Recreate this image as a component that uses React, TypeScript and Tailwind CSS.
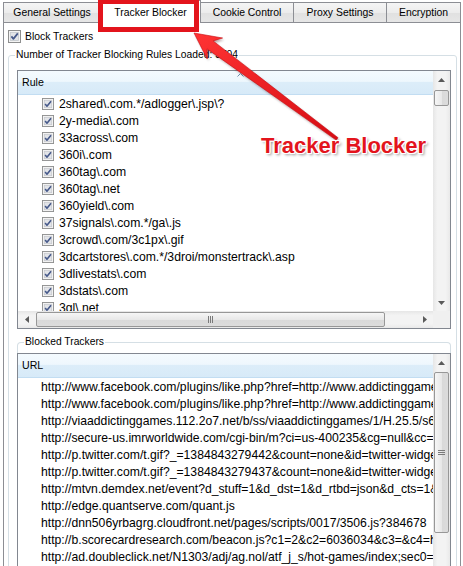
import React from "react";

const rules = [
  "2shared\\.com.*/adlogger\\.jsp\\?",
  "2y-media\\.com",
  "33across\\.com",
  "360i\\.com",
  "360tag\\.com",
  "360tag\\.net",
  "360yield\\.com",
  "37signals\\.com.*/ga\\.js",
  "3crowd\\.com/3c1px\\.gif",
  "3dcartstores\\.com.*/3droi/monstertrack\\.asp",
  "3dlivestats\\.com",
  "3dstats\\.com",
  "3gl\\.net",
];

const urls = [
  "http://www.facebook.com/plugins/like.php?href=http://www.addictinggames.com/",
  "http://www.facebook.com/plugins/like.php?href=http://www.addictinggames.com/",
  "http://viaaddictinggames.112.2o7.net/b/ss/viaaddictinggames/1/H.25.5/s64381",
  "http://secure-us.imrworldwide.com/cgi-bin/m?ci=us-400235&cg=null&cc=1",
  "http://p.twitter.com/t.gif?_=1384843279442&count=none&id=twitter-widget-0",
  "http://p.twitter.com/t.gif?_=1384843279437&count=none&id=twitter-widget-1",
  "http://mtvn.demdex.net/event?d_stuff=1&d_dst=1&d_rtbd=json&d_cts=1&d_cb=",
  "http://edge.quantserve.com/quant.js",
  "http://dnn506yrbagrg.cloudfront.net/pages/scripts/0017/3506.js?384678",
  "http://b.scorecardresearch.com/beacon.js?c1=2&c2=6036034&c3=&c4=http",
  "http://ad.doubleclick.net/N1303/adj/ag.nol/atf_j_s/hot-games/index;sec0=hot",
];

function Check({ size }: { size: number }) {
  return (
    <svg width={size} height={size} viewBox="0 0 13 13" className="shrink-0 block">
      <rect x="0.5" y="0.5" width="12" height="12" fill="#f4f4f4" stroke="#8e8f8f" />
      <rect x="2.5" y="2.5" width="8" height="8" fill="#e2e4e8" stroke="#c4c7cc" strokeWidth="0.8" />
      <path d="M3.4 6.4 L5.4 8.9 L9.8 3.4" stroke="#46598a" strokeWidth="1.7" fill="none" strokeLinejoin="round" />
    </svg>
  );
}

function Tri({ dir }: { dir: "up" | "down" | "left" | "right" }) {
  const d =
    dir === "up"
      ? "M0 4 L3.5 0 L7 4 Z"
      : dir === "down"
      ? "M0 0 L7 0 L3.5 4 Z"
      : dir === "left"
      ? "M4 0 L4 7 L0 3.5 Z"
      : "M0 0 L4 3.5 L0 7 Z";
  const w = dir === "up" || dir === "down" ? 7 : 4;
  const h = dir === "up" || dir === "down" ? 4 : 7;
  return (
    <svg width={w} height={h} viewBox={`0 0 ${w} ${h}`} className="block">
      <path d={d} fill="#5a5a5a" />
    </svg>
  );
}

function Tab({ w, children }: { w: string; children: React.ReactNode }) {
  return (
    <div
      className={`${w} h-[20px] border border-b-0 border-[#8c8e94] -mr-px bg-[linear-gradient(to_bottom,#f5f5f5,#ececec_50%,#e1e1e1_55%,#e6e6e6)] flex items-center justify-center text-[10.4px] leading-[12px] whitespace-nowrap pt-[1px]`}
    >
      {children}
    </div>
  );
}

function VScroll({ thumbTop, thumbH, grip }: { thumbTop: string; thumbH: string; grip?: boolean }) {
  return (
    <div className="w-[17px] shrink-0 flex flex-col bg-[linear-gradient(to_right,#e6e6e6,#f3f3f3_25%,#f3f3f3_75%,#e9e9e9)]">
      <div className="h-[17px] shrink-0 flex items-center justify-center">
        <Tri dir="up" />
      </div>
      <div className="flex-1 min-h-0 flex flex-col items-center">
        <div
          className={`${thumbTop} ${thumbH} w-[15px] rounded-[2px] border border-[#979797] bg-[linear-gradient(to_right,#f6f6f6,#e8e8e8_50%,#d9d9d9_51%,#dcdcdc)] flex items-center justify-center`}
        >
          {grip && (
            <div className="flex flex-col gap-[1px]">
              <div className="w-[7px] h-px bg-[#7a7a7a]" />
              <div className="w-[7px] h-px bg-[#7a7a7a]" />
              <div className="w-[7px] h-px bg-[#7a7a7a]" />
            </div>
          )}
        </div>
      </div>
      <div className="h-[17px] shrink-0 flex items-center justify-center">
        <Tri dir="down" />
      </div>
    </div>
  );
}

function HeaderCell({ label, sort }: { label: string; sort?: boolean }) {
  return (
    <div className="relative h-[24px] shrink-0 flex items-center pl-[4px] text-[10.6px] border-b border-[#c2ddf2] bg-[linear-gradient(to_bottom,#f4fafe,#eef7fd_45%,#dcedf9_50%,#d7eaf8)]">
      {label}
      {sort && (
        <svg width="7" height="4" viewBox="0 0 7 4" className="absolute left-[219px] top-[2px]">
          <path d="M0.5 3.5 L3.5 0.5 L6.5 3.5" stroke="#6d8fae" fill="none" />
        </svg>
      )}
    </div>
  );
}

const ARROW =
  "194,33 222.6,38 213.1,40.9 338,137.7 336.2,140.1 207.1,48.9 207.2,59";

export default function App() {
  return (
    <div className="relative w-[463px] h-[566px] overflow-hidden bg-white text-black font-['Liberation_Sans',Arial,sans-serif]">
      {/* Tabs */}
      <div className="relative z-10 flex items-end h-[22px] pl-[3px]">
        <Tab w="w-[98px]">General Settings</Tab>
        <div className="w-[101px] h-[23px] -mb-px -mr-px bg-white border border-b-0 border-[#8c8e94] flex items-center justify-center text-[10.4px] leading-[12px] whitespace-nowrap pt-[1px]">
          Tracker Blocker
        </div>
        <Tab w="w-[94px]">Cookie Control</Tab>
        <Tab w="w-[94px]">Proxy Settings</Tab>
        <Tab w="w-[75px]">Encryption</Tab>
      </div>

      {/* Panel */}
      <div className="ml-[3px] w-[458px] h-[560px] border border-[#8c8e94] bg-white overflow-hidden">
        <div className="flex items-center h-[13px] mt-[7px] ml-[4px]">
          <Check size={13} />
          <span className="ml-[4px] text-[10.4px] leading-[12px]">Block Trackers</span>
        </div>

        <fieldset className="min-w-0 mt-[6px] ml-[4px] mr-[3px] h-[560px] border border-[#d5dfe5] rounded-[3px] pl-[8px] pr-[5px]">
          <legend className="ml-[-2px] px-[1px] text-[10.3px] leading-[12px]">
            Number of Tracker Blocking Rules Loaded: 3704
          </legend>

          {/* Rule list */}
          <div className="mt-[9px] h-[259px] border border-[#828790] flex flex-col bg-white overflow-hidden">
            <div className="flex flex-1 min-h-0">
              <div className="flex-1 min-w-0 flex flex-col overflow-hidden">
                <HeaderCell label="Rule" sort />
                <div className="flex-1 min-h-0 overflow-hidden">
                  {rules.map((r, i) => (
                    <div key={i} className="h-[17px] flex items-center pl-[24px] gap-[5px] text-[12.2px] leading-[14px] whitespace-nowrap">
                      <Check size={12} />
                      <span>{r}</span>
                    </div>
                  ))}
                </div>
              </div>
              <VScroll thumbTop="mt-[2px]" thumbH="h-[16px]" />
            </div>
            <div className="h-[17px] shrink-0 flex bg-[linear-gradient(to_bottom,#e6e6e6,#f3f3f3_25%,#f3f3f3_75%,#e9e9e9)]">
              <div className="w-[17px] shrink-0 flex items-center justify-center">
                <Tri dir="left" />
              </div>
              <div className="flex-1 min-w-0 flex items-center">
                <div className="ml-[1px] w-[349px] h-[15px] rounded-[2px] border border-[#979797] bg-[linear-gradient(to_bottom,#f6f6f6,#e8e8e8_50%,#d9d9d9_51%,#dcdcdc)] flex items-center justify-center">
                  <div className="flex gap-[1px]">
                    <div className="w-px h-[7px] bg-[#7a7a7a]" />
                    <div className="w-px h-[7px] bg-[#7a7a7a]" />
                    <div className="w-px h-[7px] bg-[#7a7a7a]" />
                  </div>
                </div>
              </div>
              <div className="w-[17px] shrink-0 flex items-center justify-center">
                <Tri dir="right" />
              </div>
              <div className="w-[17px] shrink-0 bg-[#f0f0f0]" />
            </div>
          </div>

          {/* Blocked trackers */}
          <fieldset className="min-w-0 mt-[7px] h-[300px] border border-b-0 border-[#d5dfe5] rounded-t-[4px]">
            <legend className="ml-[6px] px-[1px] text-[10.3px] leading-[12px]">Blocked Trackers</legend>
            <div className="mt-[5px] -mx-px h-[230px] border border-[#828790] flex bg-white overflow-hidden">
              <div className="flex-1 min-w-0 flex flex-col overflow-hidden">
                <HeaderCell label="URL" />
                <div className="flex-1 min-h-0 overflow-hidden">
                  {urls.map((u, i) => (
                    <div key={i} className="h-[17px] flex items-center pl-[23px] text-[12.2px] leading-[14px] whitespace-nowrap">
                      {u}
                    </div>
                  ))}
                </div>
              </div>
              <VScroll thumbTop="mt-[1px]" thumbH="h-[161px]" grip />
            </div>
          </fieldset>
        </fieldset>
      </div>

      {/* Annotation: red frame */}
      <div className="absolute left-[98px] top-[-1px] w-[101px] h-[33px] border-[5px] border-[#e3141c] z-20" />

      {/* Annotation: arrow */}
      <svg className="absolute left-0 top-0 z-20 pointer-events-none" width="463" height="566" viewBox="0 0 463 566">
        <defs>
          <filter id="blur" x="-20%" y="-20%" width="140%" height="140%">
            <feGaussianBlur stdDeviation="1.2" />
          </filter>
          <linearGradient id="red" x1="0" y1="0" x2="1" y2="1">
            <stop offset="0" stopColor="#ff3434" />
            <stop offset="1" stopColor="#d60c13" />
          </linearGradient>
        </defs>
        <polygon points={ARROW} fill="rgba(60,0,0,0.35)" transform="translate(1.5,2)" filter="url(#blur)" />
        <polygon points={ARROW} fill="url(#red)" stroke="#c80a10" strokeWidth="0.6" strokeLinejoin="round" />
      </svg>

      {/* Annotation: red label */}
      <div className="absolute left-[261px] top-[135px] z-20 text-[22px] leading-[22px] font-bold text-[#e3141c] whitespace-nowrap [text-shadow:1px_0_0_#fff,-1px_0_0_#fff,0_1px_0_#fff,0_-1px_0_#fff,1px_1px_0_#fff,-1px_-1px_0_#fff,1px_-1px_0_#fff,-1px_1px_0_#fff,2px_2px_3px_rgba(0,0,0,0.45)]">
        Tracker Blocker
      </div>
    </div>
  );
}
